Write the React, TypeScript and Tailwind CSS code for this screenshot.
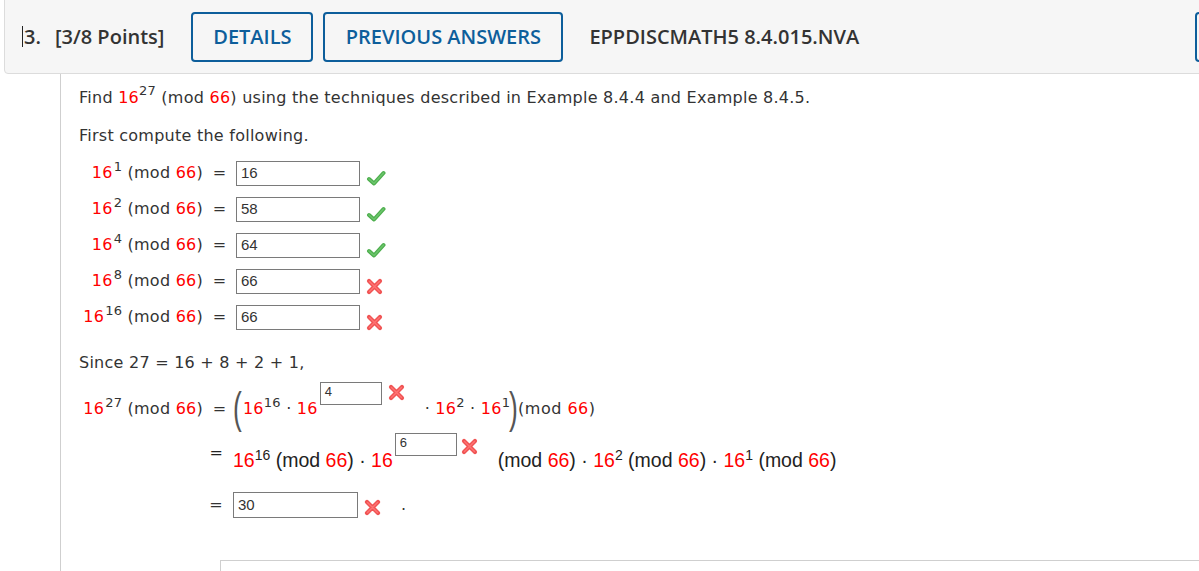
import React from 'react'

const body = { fontFamily: '"DejaVu Sans", Verdana, sans-serif' }
const arial = { fontFamily: '"Liberation Sans", Arial, sans-serif' }
const open = { fontFamily: '"Open Sans", "Liberation Sans", sans-serif' }

function Check() {
  return (
    <svg width="20" height="16" viewBox="0 0 20 16" className="shrink-0">
      <path d="M3 9 L8 13.5 L17.5 3" fill="none" stroke="#4cae4c" strokeWidth="4" strokeLinecap="round" strokeLinejoin="round" />
      <path d="M3 9 L8 13.5 L17.5 3" fill="none" stroke="#6cc46c" strokeWidth="1.6" strokeLinecap="round" strokeLinejoin="round" />
    </svg>
  )
}

function Cross() {
  return (
    <svg width="17" height="17" viewBox="0 0 17 17" className="shrink-0">
      <path d="M3 3 L14 14 M14 3 L3 14" stroke="#f05454" strokeWidth="4.2" strokeLinecap="round" />
      <path d="M3.5 3.5 L13.5 13.5 M13.5 3.5 L3.5 13.5" stroke="#ff7373" strokeWidth="1.4" strokeLinecap="round" />
    </svg>
  )
}

function R({ children }: { children: React.ReactNode }) {
  return <span className="text-[#f00]">{children}</span>
}

function Box({ value, w, h, small }: { value: string; w: number; h: number; small?: boolean }) {
  return (
    <div
      className={`border border-[#7a7a7a] bg-white text-[#333] pl-[4px] shrink-0 flex tracking-normal ${small ? 'items-start text-[13px] leading-[16px] pt-[1px]' : 'items-center text-[15px]'}`}
      style={{ ...arial, width: w, height: h }}
    >
      {value}
    </div>
  )
}

function Label({ base = '16', exp }: { base?: string; exp: string }) {
  return (
    <span>
      <R>{base}</R>
      <sup className="text-[13px] ml-[1px] top-[-0.55em]">{exp}</sup> (mod <R>66</R>)
    </span>
  )
}

function PowerRow({ exp, value, ok }: { exp: string; value: string; ok: boolean }) {
  return (
    <div className="flex items-center h-[36px]">
      <div className="w-[124px] text-right whitespace-nowrap">
        <Label exp={exp} />
      </div>
      <div className="w-[33px] text-center">=</div>
      <Box value={value} w={124} h={25} />
      <div className="ml-[6px] mt-[10px]">{ok ? <Check /> : <Cross />}</div>
    </div>
  )
}

export default function App() {
  return (
    <div className="w-[1199px] h-[571px] overflow-hidden bg-white relative">
      <div className="ml-[4px] -mt-px w-[1210px] h-[75px] border border-[#dcdcdc] rounded-bl-[4px] bg-[#f6f6f6] flex items-center text-[#333] whitespace-nowrap" style={open}>
        <span className="w-px h-[21px] bg-[#222] ml-[17px] shrink-0" />
        <span className="text-[20px] font-semibold ml-[1px] shrink-0">3.</span>
        <span className="text-[20px] font-semibold ml-[14px] shrink-0">[3/8 Points]</span>
        <button className="ml-[27px] h-[50px] w-[122px] shrink-0 border-2 border-[#0d5e9b] rounded-[4px] text-[#0d5e9b] text-[20px] font-semibold mt-[1px]">DETAILS</button>
        <button className="ml-[10px] h-[50px] w-[240px] shrink-0 border-2 border-[#0d5e9b] rounded-[4px] text-[#0d5e9b] text-[20px] font-semibold mt-[1px]">PREVIOUS ANSWERS</button>
        <span className="ml-[26px] text-[20px] font-semibold shrink-0">EPPDISCMATH5 8.4.015.NVA</span>
        <button className="ml-[336px] h-[50px] w-[60px] shrink-0 border-2 border-[#0d5e9b] rounded-[4px] mt-[1px]" />
      </div>

      <div className="ml-[60px] border-l border-[#cfcfcf] h-[497px] pl-[18px] text-[16px] text-[#333] pt-[14px] tracking-[0.25px]" style={body}>
        <p className="leading-[20px]">
          Find <R>16</R>
          <sup className="text-[13px] top-[-0.65em]">27</sup> (mod <R>66</R>) using the techniques described in Example 8.4.4 and Example 8.4.5.
        </p>
        <p className="leading-[20px] mt-[18px]">First compute the following.</p>
        <div className="mt-[9px]">
          <PowerRow exp="1" value="16" ok />
          <PowerRow exp="2" value="58" ok />
          <PowerRow exp="4" value="64" ok />
          <PowerRow exp="8" value="66" ok={false} />
          <PowerRow exp="16" value="66" ok={false} />
        </div>
        <p className="leading-[20px] mt-[18px]">Since 27 = 16 + 8 + 2 + 1,</p>

        <div className="flex items-center h-[50px] mt-[9px]">
          <div className="w-[124px] text-right whitespace-nowrap mt-[4px]">
            <Label exp="27" />
          </div>
          <div className="w-[33px] text-center mt-[4px]">=</div>
          <span className="text-[44px] leading-[46px] text-[#555] font-light scale-x-[0.6] -ml-[6px] -mr-[2px] mt-[2px]" style={arial}>(</span>
          <span className="whitespace-nowrap mt-[4px]">
            <R>16</R>
            <sup className="text-[13px] top-[-0.55em]">16</sup> · <R>16</R>
          </span>
          <div className="self-start ml-[2px]">
            <Box value="4" w={62} h={23} small />
          </div>
          <div className="self-start mt-[2px] ml-[6px]"><Cross /></div>
          <span className="whitespace-nowrap ml-[20px] mt-[4px]">
            · <R>16</R>
            <sup className="text-[13px] top-[-0.55em]">2</sup> · <R>16</R>
            <sup className="text-[13px] top-[-0.55em]">1</sup>
          </span>
          <span className="text-[44px] leading-[46px] text-[#555] font-light scale-x-[0.6] -ml-[4px] -mr-[3px] mt-[2px]" style={arial}>)</span>
          <span className="whitespace-nowrap mt-[4px] tracking-[0.5px]">(mod <R>66</R>)</span>
        </div>

        <div className="flex items-start h-[50px] mt-[1px] text-[#222] tracking-normal" style={arial}>
          <div className="w-[154px] text-right pr-[10px] text-[16px] mt-[8px]" style={body}>=</div>
          <span className="whitespace-nowrap text-[19.5px] mt-[13px]">
            <R>16</R>
            <sup className="text-[14px] top-[-0.5em]">16</sup> (mod <R>66</R>) · <R>16</R>
          </span>
          <div className="ml-[2px]">
            <Box value="6" w={62} h={23} small />
          </div>
          <div className="mt-[5px] ml-[4px]"><Cross /></div>
          <span className="whitespace-nowrap text-[19.5px] mt-[13px] ml-[20px]">
            (mod <R>66</R>) · <R>16</R>
            <sup className="text-[14px] top-[-0.5em]">2</sup> (mod <R>66</R>) · <R>16</R>
            <sup className="text-[14px] top-[-0.5em]">1</sup> (mod <R>66</R>)
          </span>
        </div>

        <div className="flex items-center h-[26px] mt-[9px]">
          <div className="w-[154px] text-right pr-[10px]">=</div>
          <Box value="30" w={125} h={26} />
          <div className="ml-[6px] mt-[4px]"><Cross /></div>
          <span className="ml-[20px]">.</span>
        </div>

        <div className="ml-[141px] mt-[42px] h-[20px] border-t border-l border-[#cfcfcf]" />
      </div>
    </div>
  )
}
